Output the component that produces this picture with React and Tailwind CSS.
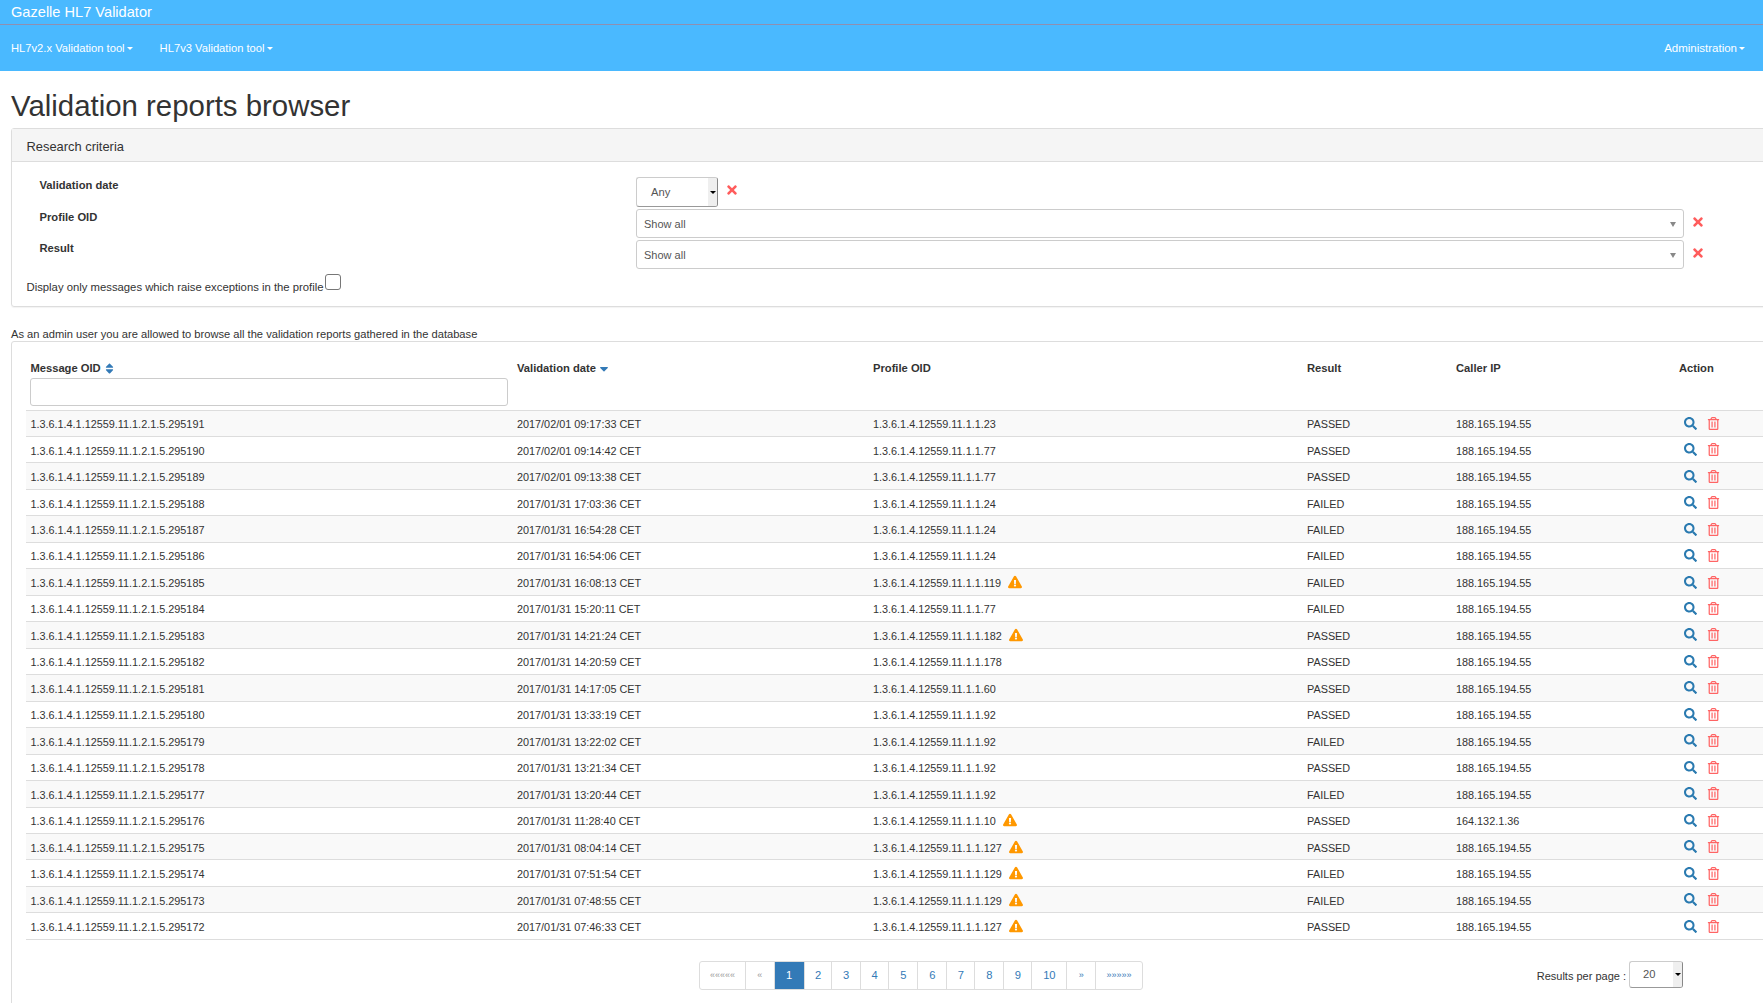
import React from 'react';
import { FaSearch, FaRegTrashAlt, FaExclamationTriangle, FaTimes, FaSort, FaSortDown } from 'react-icons/fa';

const IP = '188.165.194.55';
const rows = [
  ['295191', '2017/02/01 09:17:33 CET', '23', 'PASSED', IP, false],
  ['295190', '2017/02/01 09:14:42 CET', '77', 'PASSED', IP, false],
  ['295189', '2017/02/01 09:13:38 CET', '77', 'PASSED', IP, false],
  ['295188', '2017/01/31 17:03:36 CET', '24', 'FAILED', IP, false],
  ['295187', '2017/01/31 16:54:28 CET', '24', 'FAILED', IP, false],
  ['295186', '2017/01/31 16:54:06 CET', '24', 'FAILED', IP, false],
  ['295185', '2017/01/31 16:08:13 CET', '119', 'FAILED', IP, true],
  ['295184', '2017/01/31 15:20:11 CET', '77', 'FAILED', IP, false],
  ['295183', '2017/01/31 14:21:24 CET', '182', 'PASSED', IP, true],
  ['295182', '2017/01/31 14:20:59 CET', '178', 'PASSED', IP, false],
  ['295181', '2017/01/31 14:17:05 CET', '60', 'PASSED', IP, false],
  ['295180', '2017/01/31 13:33:19 CET', '92', 'PASSED', IP, false],
  ['295179', '2017/01/31 13:22:02 CET', '92', 'FAILED', IP, false],
  ['295178', '2017/01/31 13:21:34 CET', '92', 'PASSED', IP, false],
  ['295177', '2017/01/31 13:20:44 CET', '92', 'FAILED', IP, false],
  ['295176', '2017/01/31 11:28:40 CET', '10', 'PASSED', '164.132.1.36', true],
  ['295175', '2017/01/31 08:04:14 CET', '127', 'PASSED', IP, true],
  ['295174', '2017/01/31 07:51:54 CET', '129', 'FAILED', IP, true],
  ['295173', '2017/01/31 07:48:55 CET', '129', 'FAILED', IP, true],
  ['295172', '2017/01/31 07:46:33 CET', '127', 'PASSED', IP, true],
];

const pages = [
  { label: '«««««', w: 'w-[45px]', text: 'text-[#999] text-[9px]' },
  { label: '«', w: 'w-[28.7px]', text: 'text-[#999] text-[9px]' },
  { label: '1', w: 'w-[30px]', text: 'text-white bg-[#337ab7] text-[11.2px]' },
  { label: '2', w: 'w-[27.7px]', text: 'text-[#337ab7] text-[11.2px]' },
  { label: '3', w: 'w-[28.7px]', text: 'text-[#337ab7] text-[11.2px]' },
  { label: '4', w: 'w-[28.3px]', text: 'text-[#337ab7] text-[11.2px]' },
  { label: '5', w: 'w-[29px]', text: 'text-[#337ab7] text-[11.2px]' },
  { label: '6', w: 'w-[29px]', text: 'text-[#337ab7] text-[11.2px]' },
  { label: '7', w: 'w-[28px]', text: 'text-[#337ab7] text-[11.2px]' },
  { label: '8', w: 'w-[29px]', text: 'text-[#337ab7] text-[11.2px]' },
  { label: '9', w: 'w-[28px]', text: 'text-[#337ab7] text-[11.2px]' },
  { label: '10', w: 'w-[35px]', text: 'text-[#337ab7] text-[11.2px]' },
  { label: '»', w: 'w-[28.7px]', text: 'text-[#337ab7] text-[9px]' },
  { label: '»»»»»', w: 'w-[46.7px]', text: 'text-[#337ab7] text-[9px]' },
];

function Caret() {
  return <span className="inline-block ml-[2px] align-middle w-0 h-0 border-x-[3px] border-x-transparent border-t-[3px] border-t-white" />;
}

function NativeSelect({ label, width, textClass }) {
  return (
    <div className={`flex items-stretch h-full ${width} rounded-[3px] border border-[#ccc] border-r-[#888] border-b-[#999] bg-white overflow-hidden`}>
      <span className={`flex-1 flex items-center text-[11.2px] text-[#555] ${textClass}`}>{label}</span>
      <span className="w-[9px] bg-[#efefef] flex items-center justify-center">
        <span className="w-0 h-0 border-x-[3px] border-x-transparent border-t-[3px] border-t-black" />
      </span>
    </div>
  );
}

function Chosen({ label }) {
  return (
    <div className="w-[1048px] h-full rounded-[3px] border border-[#ccc] bg-white flex items-center justify-between pl-[7px] pr-[7px]">
      <span className="text-[11px] text-[#555] mt-[2px]">{label}</span>
      <span className="w-0 h-0 border-x-[3.5px] border-x-transparent border-t-[5px] border-t-[#888] mt-[1px]" />
    </div>
  );
}

function FilterRow({ label, height, children }) {
  return (
    <div className={`flex ${height}`}>
      <label className="w-[609.5px] pl-[13px] pt-[1px] text-[11.2px] leading-[14px] font-bold">{label}</label>
      <div className="flex items-center h-full">
        {children}
        <FaTimes className="ml-[7px] mb-[4px] text-[#ff5c5c]" size={14} />
      </div>
    </div>
  );
}

export default function App() {
  return (
    <div className="w-screen h-screen overflow-hidden bg-white text-[#333] font-['Liberation_Sans',Arial,sans-serif]">
      <nav className="h-[71px] bg-[#4ab9ff] text-white">
        <div className="h-[25px] border-b border-b-[#8f8fb0] pl-[11px] text-[14.6px] leading-[25px]">Gazelle HL7 Validator</div>
        <div className="h-[46px] flex items-center justify-between pl-[11px] pr-[18px] text-[11.2px]">
          <div className="flex gap-[27px]">
            <span>HL7v2.x Validation tool<Caret /></span>
            <span>HL7v3 Validation tool<Caret /></span>
          </div>
          <span className="text-[11.5px] pt-[1px]">Administration<Caret /></span>
        </div>
      </nav>

      <main className="px-[11px]">
        <h1 className="mt-[19px] mb-[6px] text-[29.4px] leading-[32px] font-normal">Validation reports browser</h1>

        <section className="w-[1790px] h-[179px] rounded-[3px] border border-[#ddd] shadow-[0_1px_1px_rgba(0,0,0,0.05)]">
          <div className="h-[33px] bg-[#f5f5f5] border-b border-[#ddd] pl-[14.5px] pt-[3px] flex items-center text-[12.9px]">Research criteria</div>
          <div className="pl-[14.5px] pt-[15px]">
            <div className="flex flex-col gap-[2px]">
              <FilterRow label="Validation date" height="h-[30px]">
                <NativeSelect label="Any" width="w-[82px]" textClass="pl-[14px]" />
              </FilterRow>
              <FilterRow label="Profile OID" height="h-[29px]">
                <Chosen label="Show all" />
              </FilterRow>
              <FilterRow label="Result" height="h-[29px]">
                <Chosen label="Show all" />
              </FilterRow>
            </div>
            <div className="mt-[5px] flex items-end text-[11.3px] leading-[13px]">
              <span>Display only messages which raise exceptions in the profile</span>
              <input type="checkbox" className="appearance-none ml-[1px] mb-[4px] w-[16px] h-[16px] rounded-[3px] border border-[#777] bg-white" />
            </div>
          </div>
        </section>

        <p className="mt-[20px] text-[11.15px] leading-[14px]">As an admin user you are allowed to browse all the validation reports gathered in the database</p>

        <section className="mt-[0px] w-[1790px] h-[700px] rounded-[3px] border border-[#ddd] pl-[14px] pt-[16px]">
          <table className="w-[1768px] table-fixed text-[10.85px]">
            <colgroup>
              <col className="w-[486.6px]" />
              <col className="w-[356px]" />
              <col className="w-[434px]" />
              <col className="w-[149px]" />
              <col className="w-[223px]" />
              <col className="w-[120px]" />
            </colgroup>
            <thead>
              <tr className="h-[52px] align-top text-left text-[11.2px] font-bold">
                <th className="pl-[4.4px] font-bold">
                  <div className="flex items-center gap-[2px] h-[20px]">Message OID <FaSort className="text-[#337ab7]" size={13} /></div>
                  <input className="block w-[478px] h-[28px] rounded-[3px] border border-[#ccc] bg-white" />
                </th>
                <th className="pl-[4.4px] font-bold">
                  <div className="flex items-center gap-[1px] h-[20px]">Validation date <FaSortDown className="text-[#337ab7] mb-[5px]" size={14} /></div>
                </th>
                <th className="pl-[4.4px] font-bold"><div className="flex items-center h-[20px]">Profile OID</div></th>
                <th className="pl-[4.4px] font-bold"><div className="flex items-center h-[20px]">Result</div></th>
                <th className="pl-[4.4px] font-bold"><div className="flex items-center h-[20px]">Caller IP</div></th>
                <th className="pl-[4.4px] font-bold"><div className="flex items-center h-[20px]">Action</div></th>
              </tr>
            </thead>
            <tbody>
              {rows.map((r, i) => (
                <tr key={r[0]} className={`h-[26.48px] border-t border-[#ddd] last:border-b ${i % 2 === 0 ? 'bg-[#f9f9f9]' : 'bg-white'}`}>
                  <td className="pl-[4.4px] pt-[2px]">1.3.6.1.4.1.12559.11.1.2.1.5.{r[0]}</td>
                  <td className="pl-[4.4px] pt-[2px]">{r[1]}</td>
                  <td className="pl-[4.4px] pt-[2px]">
                    <span className="inline-flex items-center gap-[7px]">
                      1.3.6.1.4.12559.11.1.1.{r[2]}
                      {r[5] && <FaExclamationTriangle className="text-[#ff9800] mb-[2px]" size={14} />}
                    </span>
                  </td>
                  <td className="pl-[4.4px] pt-[2px]">{r[3]}</td>
                  <td className="pl-[4.4px] pt-[2px]">{r[4]}</td>
                  <td className="pl-[4.4px]">
                    <span className="flex items-center ml-[5px] gap-[10px]">
                      <FaSearch className="text-[#2a7ab0]" size={13} />
                      <FaRegTrashAlt className="text-[#ff6464]" size={13} />
                    </span>
                  </td>
                </tr>
              ))}
            </tbody>
          </table>

          <div className="mt-[21px] flex items-start">
            <div className="ml-[673px] flex h-[29px] rounded-[3px] border border-[#ddd] overflow-hidden">
              {pages.map((p, i) => (
                <span key={p.label} className={`${p.w} ${p.text} flex items-center justify-center ${i > 0 ? 'border-l border-[#ddd]' : ''}`}>{p.label}</span>
              ))}
            </div>
            <div className="ml-[394px] flex items-center h-[27px] text-[11px]">
              <span className="mr-[3px] mt-[3px]">Results per page :</span>
              <NativeSelect label="20" width="w-[54px]" textClass="pl-[13px]" />
            </div>
          </div>
        </section>
      </main>
    </div>
  );
}
